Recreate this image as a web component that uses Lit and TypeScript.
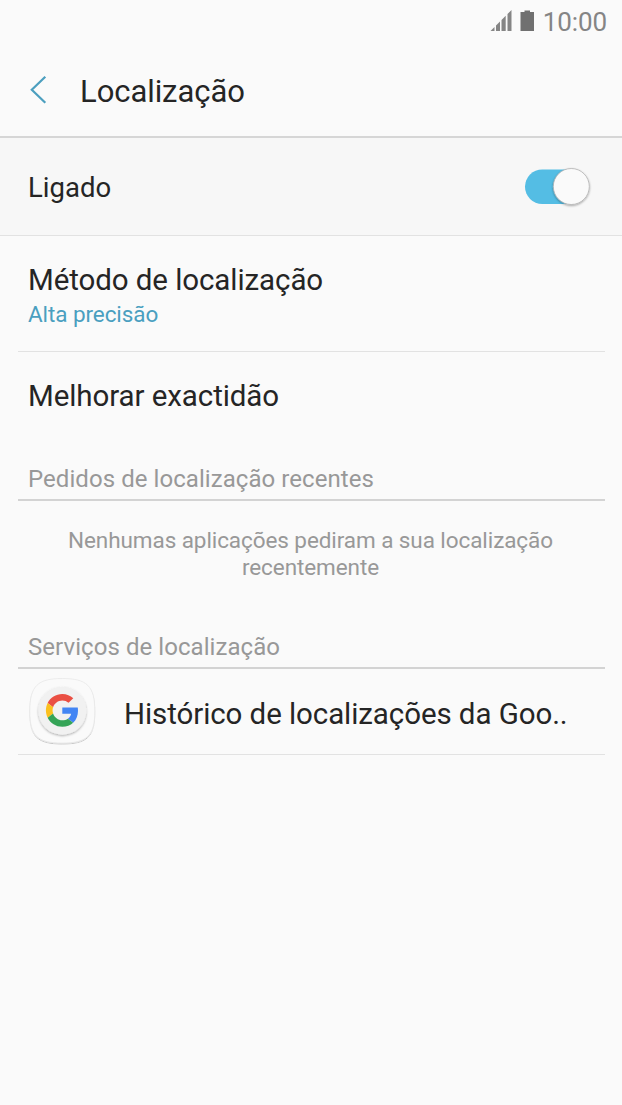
import { LitElement, html, css } from "lit";
import { customElement } from "lit/decorators.js";

@customElement("app-root")
export class AppRoot extends LitElement {
  static styles = css`
    :host {
      display: block;
      height: 1105px;
      background: #fafafa;
      color: #252525;
      font-family: Roboto, sans-serif;
      overflow: hidden;
    }
    * { box-sizing: border-box; }
    svg { display: block; flex: none; }
    span, p, h1, h2 { margin: 0; font-weight: 400; white-space: nowrap; }
    .status {
      height: 44px;
      display: flex;
      justify-content: flex-end;
      padding-right: 15px;
      color: #858585;
    }
    .clock { font-size: 26px; line-height: 44px; margin-left: 7px; letter-spacing: -0.1px; }
    .header { height: 94px; display: flex; border-bottom: 2px solid #d6d6d6; }
    .back { margin: 31px 0 0 29px; }
    .title { font-size: 31px; line-height: 95px; margin-left: 31px; letter-spacing: -0.07px; }
    .master {
      height: 98px;
      display: flex;
      justify-content: space-between;
      background: #f7f7f7;
      border-bottom: 1px solid #e2e2e2;
      padding-left: 28px;
      padding-right: 28px;
    }
    .label { font-size: 29.5px; line-height: 40px; letter-spacing: -0.08px; }
    .on { font-size: 27.5px; line-height: 99px; }
    .toggle { margin-top: 26px; }
    .list { padding: 0 17px 0 18px; }
    .row { padding-left: 10px; border-bottom: 1px solid #e2e2e2; display: flex; }
    .method { height: 116px; padding-top: 24px; flex-direction: column; }
    .value { font-size: 22.5px; line-height: 29px; color: #4a9fc0; letter-spacing: -0.08px; }
    .improve { height: 96px; padding-top: 24px; border: 0; }
    .section {
      font-size: 24px;
      line-height: 34px;
      letter-spacing: 0.06px;
      color: #989898;
      padding-left: 10px;
      border-bottom: 2px solid #d3d3d3;
    }
    .recent { height: 53px; padding-top: 14px; }
    .services { height: 54px; padding-top: 15px; }
    .empty {
      height: 114px;
      padding-top: 26px;
      text-align: center;
      color: #989898;
      font-size: 22.5px;
      line-height: 27px;
      letter-spacing: -0.08px;
      white-space: normal;
      padding-left: 20px;
      padding-right: 22px;
    }
    .service { height: 86px; }
    .history { line-height: 90px; margin-left: 28px; }
  `;

  render() {
    return html`
      <div class="status">
        <svg width="46" height="44" viewBox="0 0 46 44" fill="#858585">
          <path d="M.5 31l4-4v4zM6 25.500l4-4v9.500h-4zM11.500 20l4.200-4.200v15.200h-4.200zM17.500 14l4-4v21h-4z" />
          <path d="M30.500 12h4v-1.500h5.500v1.500h4v19h-13.500z" fill="#707070" />
        </svg>
        <span class="clock">10:00</span>
      </div>
      <div class="header">
        <svg class="back" width="20" height="30" viewBox="0 0 20 30">
          <path d="M16.300 1.800L2.800 14.800l13.500 13" fill="none" stroke="#4c9fbf" stroke-width="2.200" />
        </svg>
        <h1 class="title">Localização</h1>
      </div>
      <div class="master">
        <span class="on">Ligado</span>
        <svg class="toggle" width="70" height="46" viewBox="0 0 70 46">
          <defs>
            <filter id="knob" x="-20%" y="-20%" width="140%" height="150%">
              <feDropShadow dx="0" dy="1" stdDeviation=".9" flood-color="#000" flood-opacity=".35" />
            </filter>
          </defs>
          <rect x="1" y="5.500" width="62" height="34.500" rx="17.250" fill="#54bde4" />
          <circle cx="47.300" cy="22.500" r="18" fill="#fafafa" stroke="#a9a9a9" stroke-width=".7" filter="url(#knob)" />
        </svg>
      </div>
      <div class="list">
        <div class="row method">
          <span class="label">Método de localização</span>
          <span class="value">Alta precisão</span>
        </div>
        <div class="row improve"><span class="label">Melhorar exactidão</span></div>
        <h2 class="section recent">Pedidos de localização recentes</h2>
        <p class="empty">Nenhumas aplicações pediram a sua localização recentemente</p>
        <h2 class="section services">Serviços de localização</h2>
        <div class="row service">
          <svg width="68" height="86" viewBox="28 669 68 86">
            <defs>
              <filter id="tile" x="-10%" y="-10%" width="120%" height="125%">
                <feDropShadow dx="0" dy="1" stdDeviation=".7" flood-color="#000" flood-opacity=".22" />
              </filter>
              <filter id="disc" x="-10%" y="-10%" width="120%" height="125%">
                <feDropShadow dx="0" dy="1.200" stdDeviation=".8" flood-color="#000" flood-opacity=".3" />
              </filter>
            </defs>
            <path d="M62.300 678.500C87 678.500 94.800 686 94.800 711S87 743 62.300 743 29.800 736 29.800 711s7.800-32.500 32.500-32.500z"
              fill="#fafafa" stroke="#e8e8e8" stroke-width=".8" filter="url(#tile)" />
            <circle cx="62.300" cy="710.700" r="24" fill="#f1f1f1" filter="url(#disc)" />
            <g transform="translate(45.900 693.900) scale(.6833)">
              <path fill="#ea4f43" d="M24 9.500c3.540 0 6.710 1.220 9.210 3.600l6.850-6.850C35.900 2.380 30.470 0 24 0 14.620 0 6.510 5.380 2.560 13.220l7.980 6.190C12.430 13.720 17.740 9.500 24 9.500z" />
              <path fill="#4285f4" d="M46.980 24.550c0-1.570-.15-3.090-.38-4.550H24v9.020h12.940c-.58 2.960-2.260 5.480-4.780 7.180l7.730 6c4.510-4.180 7.090-10.360 7.090-17.650z" />
              <path fill="#fbc01e" d="M10.530 28.590c-.48-1.450-.76-2.990-.76-4.590s.27-3.140.76-4.590l-7.980-6.190C.92 16.460 0 20.120 0 24c0 3.880.92 7.540 2.560 10.780z" />
              <path fill="#35a457" d="M24 48c6.480 0 11.930-2.130 15.890-5.810l-7.730-6c-2.150 1.450-4.920 2.300-8.160 2.300-6.260 0-11.570-4.220-13.470-9.910l-7.980 6.190C6.510 42.620 14.620 48 24 48z" />
            </g>
          </svg>
          <span class="label history">Histórico de localizações da Goo..</span>
        </div>
      </div>
    `;
  }
}
